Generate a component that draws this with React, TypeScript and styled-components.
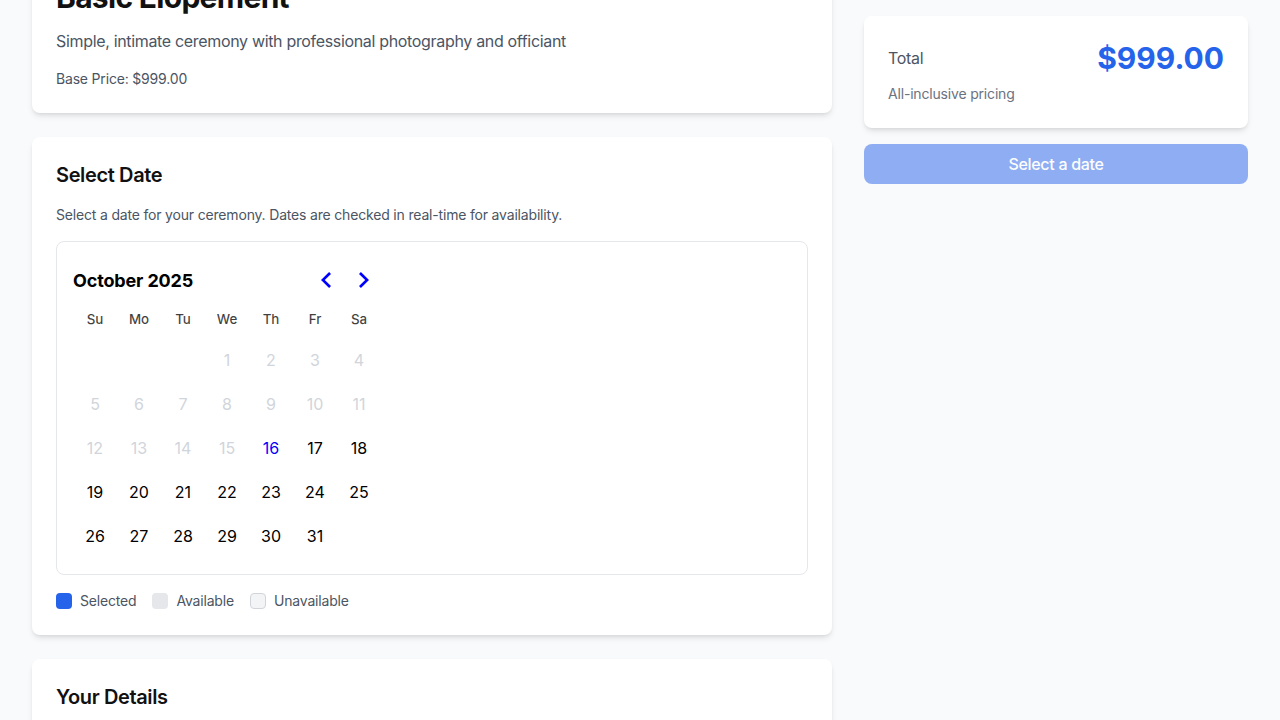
import React from "react";
import styled, { createGlobalStyle } from "styled-components";

const GlobalStyle = createGlobalStyle`
  html, body { margin: 0; padding: 0; background: #f9fafb; overflow: hidden; }
  body { font-family: Inter, "Noto Sans", sans-serif; color: #111827; -webkit-font-smoothing: antialiased; }
  * { box-sizing: border-box; }
`;

const Page = styled.div`
  display: grid;
  grid-template-columns: repeat(3, minmax(0, 1fr));
  gap: 32px;
  padding: 0 32px;
  align-items: start;
  width: 1280px;
`;

const LeftColumn = styled.div`
  grid-column: span 2;
  display: flex;
  flex-direction: column;
  gap: 24px;
  margin-top: -45px;
`;

const RightColumn = styled.div`
  display: flex;
  flex-direction: column;
  gap: 16px;
  padding-top: 16px;
`;

const Card = styled.section`
  background: #ffffff;
  border-radius: 8px;
  box-shadow: 0 4px 6px -1px rgba(0, 0, 0, 0.1), 0 2px 4px -2px rgba(0, 0, 0, 0.1);
  padding: 24px;
`;

const PackageTitle = styled.h1`
  margin: 0 0 14px;
  font-size: 30px;
  line-height: 36px;
  font-weight: 700;
  letter-spacing: -0.7px;
  color: #111;
`;

const Description = styled.p`
  margin: 0 0 16px;
  font-size: 16px;
  line-height: 24px;
  letter-spacing: -0.33px;
  color: #4b5563;
`;

const SmallText = styled.p<{ $mb?: number; $color?: string }>`
  margin: 0 0 ${(p) => p.$mb ?? 0}px;
  font-size: 14px;
  line-height: 20px;
  letter-spacing: -0.18px;
  color: ${(p) => p.$color ?? "#4b5563"};
`;

const SectionTitle = styled.h2`
  margin: 0 0 16px;
  font-size: 20px;
  line-height: 28px;
  font-weight: 600;
  letter-spacing: -0.36px;
  color: #111;
`;

const CalendarBox = styled.div`
  border: 1px solid #e5e7eb;
  border-radius: 8px;
  padding: 16px;
`;

const Month = styled.div`
  position: relative;
  width: 308px;
`;

const Caption = styled.div`
  height: 44px;
  display: flex;
  align-items: center;
  font-size: 18px;
  font-weight: 700;
  letter-spacing: -0.15px;
  color: #000;
`;

const Nav = styled.div`
  position: absolute;
  top: 4px;
  right: 0;
  display: flex;
`;

const NavButton = styled.button`
  width: 36px;
  height: 36px;
  border: 0;
  background: transparent;
  padding: 0;
  display: flex;
  align-items: center;
  justify-content: center;
  cursor: pointer;
  svg { fill: blue; }
`;

const Grid = styled.div`
  display: grid;
  grid-template-columns: repeat(7, 44px);
`;

const Weekday = styled.div`
  height: 36px;
  padding-bottom: 2px;
  display: flex;
  align-items: center;
  justify-content: center;
  font-size: 13.33px;
  font-weight: 500;
  color: rgba(0, 0, 0, 0.75);
`;

type DayState = "disabled" | "today" | "available" | "empty";

const Day = styled.div<{ $state: DayState }>`
  height: 44px;
  display: flex;
  align-items: center;
  justify-content: center;
  font-size: 16px;
  color: ${(p) =>
    p.$state === "disabled" ? "#d1d5db" : p.$state === "today" ? "blue" : "#000"};
`;

const Legend = styled.div`
  display: flex;
  gap: 16px;
  margin-top: 16px;
`;

const LegendItem = styled.div`
  display: flex;
  align-items: center;
  gap: 8px;
  font-size: 14px;
  line-height: 20px;
  letter-spacing: -0.18px;
  color: #4b5563;
`;

const Swatch = styled.span<{ $bg: string; $border?: string }>`
  width: 16px;
  height: 16px;
  border-radius: 4px;
  background: ${(p) => p.$bg};
  border: ${(p) => (p.$border ? `1px solid ${p.$border}` : "none")};
`;

const TotalRow = styled.div`
  display: flex;
  justify-content: space-between;
  align-items: center;
  margin-bottom: 8px;
`;

const TotalLabel = styled.span`
  font-size: 16px;
  line-height: 24px;
  letter-spacing: -0.3px;
  color: #4b5563;
`;

const TotalValue = styled.span`
  font-size: 30px;
  line-height: 36px;
  font-weight: 700;
  color: #2563eb;
`;

const PrimaryButton = styled.button`
  width: 100%;
  height: 40px;
  border: 0;
  border-radius: 8px;
  background: #2563eb;
  color: #ffffff;
  font-family: inherit;
  font-size: 16px;
  font-weight: 500;
  letter-spacing: -0.3px;
  opacity: 0.5;
  cursor: not-allowed;
`;

const DetailsBody = styled.div`
  height: 300px;
`;

const Chevron = ({ dir }: { dir: "left" | "right" }) => (
  <svg width="24" height="24" viewBox="0 0 24 24">
    {dir === "left" ? (
      <polygon points="16 18.112 9.81111111 12 16 5.87733333 14.0888889 4 6 12 14.0888889 20" />
    ) : (
      <polygon points="8 18.112 14.18888889 12 8 5.87733333 9.91111111 4 18 12 9.91111111 20" />
    )}
  </svg>
);

const weekdays = ["Su", "Mo", "Tu", "We", "Th", "Fr", "Sa"];

function buildDays(): { label: string; state: DayState }[] {
  const cells: { label: string; state: DayState }[] = [];
  for (let i = 0; i < 3; i++) cells.push({ label: "", state: "empty" });
  for (let d = 1; d <= 31; d++) {
    const state: DayState = d < 16 ? "disabled" : d === 16 ? "today" : "available";
    cells.push({ label: String(d), state });
  }
  return cells;
}

export default function App() {
  const days = buildDays();
  return (
    <>
      <GlobalStyle />
      <Page>
        <LeftColumn>
          <Card>
            <PackageTitle>Basic Elopement</PackageTitle>
            <Description>Simple, intimate ceremony with professional photography and officiant</Description>
            <SmallText>Base Price: $999.00</SmallText>
          </Card>
          <Card>
            <SectionTitle>Select Date</SectionTitle>
            <SmallText $mb={16}>
              Select a date for your ceremony. Dates are checked in real-time for availability.
            </SmallText>
            <CalendarBox>
              <Month>
                <Caption>October 2025</Caption>
                <Nav>
                  <NavButton aria-label="Previous month">
                    <Chevron dir="left" />
                  </NavButton>
                  <NavButton aria-label="Next month">
                    <Chevron dir="right" />
                  </NavButton>
                </Nav>
                <Grid>
                  {weekdays.map((w) => (
                    <Weekday key={w}>{w}</Weekday>
                  ))}
                  {days.map((d, i) => (
                    <Day key={i} $state={d.state}>
                      {d.label}
                    </Day>
                  ))}
                </Grid>
              </Month>
            </CalendarBox>
            <Legend>
              <LegendItem>
                <Swatch $bg="#2563eb" />
                Selected
              </LegendItem>
              <LegendItem>
                <Swatch $bg="#e5e7eb" />
                Available
              </LegendItem>
              <LegendItem>
                <Swatch $bg="#f3f4f6" $border="#d1d5db" />
                Unavailable
              </LegendItem>
            </Legend>
          </Card>
          <Card>
            <SectionTitle>Your Details</SectionTitle>
            <DetailsBody />
          </Card>
        </LeftColumn>
        <RightColumn>
          <Card>
            <TotalRow>
              <TotalLabel>Total</TotalLabel>
              <TotalValue>$999.00</TotalValue>
            </TotalRow>
            <SmallText $color="#6b7280">All-inclusive pricing</SmallText>
          </Card>
          <PrimaryButton disabled>Select a date</PrimaryButton>
        </RightColumn>
      </Page>
    </>
  );
}
